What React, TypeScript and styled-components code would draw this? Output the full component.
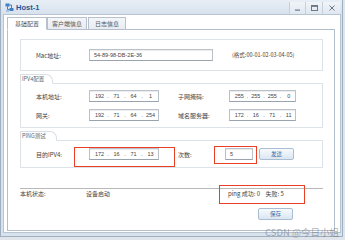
import React from "react";
import styled, { createGlobalStyle } from "styled-components";

const GlobalStyle = createGlobalStyle`
  html, body { margin: 0; padding: 0; }
  body {
    width: 345px;
    height: 240px;
    overflow: hidden;
    background: #dfe5ea;
    font-family: "Noto Sans CJK SC", "Noto Sans", sans-serif;
    color: #444;
  }
`;

const Page = styled.div`
  position: relative;
  width: 345px;
  height: 240px;
  overflow: hidden;
`;

const Window = styled.div`
  width: 343px;
  height: 237px;
  box-sizing: border-box;
  background: linear-gradient(#e8eef5, #d8e2ed 14px, #d9e3ee);
  border: 1px solid #9eafc1;
  border-top: none;
  padding: 0 1px 3px 2px;
  display: flex;
  flex-direction: column;
`;

const TitleBar = styled.div`
  height: 14px;
  display: flex;
  align-items: center;
`;

const Title = styled.span`
  font-family: "Liberation Sans", "Noto Sans CJK SC", sans-serif;
  font-size: 7.5px;
  font-weight: bold;
  color: #1f5796;
  margin-left: 2px;
`;

const WinButtons = styled.div`
  margin-left: auto;
  display: flex;
  height: 12px;
  margin-top: 1px;
  margin-right: 1px;
`;

const WinButton = styled.div<{ $w: number }>`
  width: ${(p) => p.$w}px;
  height: 12px;
  display: flex;
  align-items: center;
  justify-content: center;
  border-left: 1px solid #c5d0dc;
  background: linear-gradient(#f1f5f9, #dfe7f0);
`;

const Body = styled.div`
  flex: 1;
  background: #fff;
  border: 1px solid #b7c4d2;
  padding: 2px 5px 1px 3px;
  display: flex;
  flex-direction: column;
`;

const Tabs = styled.div`
  display: flex;
  height: 12px;
  position: relative;
  z-index: 1;
`;

const Tab = styled.div<{ $w: number; $active?: boolean; $gap?: number }>`
  width: ${(p) => p.$w}px;
  height: ${(p) => (p.$active ? 13 : 12)}px;
  box-sizing: border-box;
  margin-right: ${(p) => p.$gap ?? 0}px;
  border: 1px solid #b6c1cd;
  border-bottom: ${(p) => (p.$active ? "1px solid #fff" : "none")};
  background: ${(p) => (p.$active ? "#fff" : "linear-gradient(#f4f6f9, #e8ecf1)")};
  font-size: 6px;
  color: #555;
  display: flex;
  align-items: center;
  justify-content: center;
  padding-bottom: ${(p) => (p.$active ? 1 : 0)}px;
`;

const Panel = styled.div`
  flex: 1;
  border: 1px solid #b3bfcc;
  padding: 9px 11px 0 12px;
  display: flex;
  flex-direction: column;
`;

const MacBox = styled.div`
  height: 32px;
  box-sizing: border-box;
  border: 1px solid #dde2e8;
  display: flex;
  align-items: center;
  padding-left: 15px;
`;

const Label = styled.span<{ $w: number; $ml?: number }>`
  width: ${(p) => p.$w}px;
  margin-left: ${(p) => p.$ml ?? 0}px;
  flex-shrink: 0;
  font-size: 6px;
  color: #444;
  white-space: nowrap;
`;

const Input = styled.div<{ $w: number }>`
  width: ${(p) => p.$w}px;
  height: 12px;
  box-sizing: border-box;
  flex-shrink: 0;
  border: 1px solid #b9c1ca;
  border-bottom-color: #9aa4ae;
  box-shadow: inset 0 1px 1px rgba(0, 0, 0, 0.08);
  background: #fff;
  display: flex;
  align-items: center;
  padding-left: 4px;
  font-family: "Liberation Sans", sans-serif;
  font-size: 5.5px;
  color: #444;
`;

const IpBox = styled(Input)`
  padding-left: 3px;
`;

const Seg = styled.span`
  width: 13px;
  text-align: center;
`;

const Dot = styled.span`
  width: 4px;
  text-align: center;
`;

const Hint = styled.span`
  margin-left: 19px;
  font-size: 5.5px;
  color: #444;
  white-space: nowrap;
`;

const Group = styled.div<{ $mt: number }>`
  margin-top: ${(p) => p.$mt}px;
  display: flex;
  flex-direction: column;
`;

const Legend = styled.div<{ $w: number }>`
  width: ${(p) => p.$w}px;
  height: 10px;
  box-sizing: border-box;
  border: 1px solid #d9dee4;
  border-bottom: 1px solid #fff;
  border-top-right-radius: 7px;
  margin-bottom: -1px;
  position: relative;
  z-index: 1;
  background: #fff;
  font-size: 5.5px;
  color: #666;
  padding-left: 1px;
  display: flex;
  align-items: center;
`;

const GroupBody = styled.div<{ $pad: number }>`
  border: 1px solid #dde2e8;
  padding: ${(p) => p.$pad}px 0 ${(p) => p.$pad}px 15px;
  display: flex;
  flex-direction: column;
  gap: 7px;
`;

const Row = styled.div`
  display: flex;
  align-items: center;
  height: 12px;
`;

const Button = styled.div<{ $ml?: number }>`
  width: 35px;
  height: 12px;
  box-sizing: border-box;
  margin-left: ${(p) => p.$ml ?? 0}px;
  border: 1px solid #a9bdd3;
  border-radius: 2px;
  background: linear-gradient(#f7fafd, #dbe6f2);
  color: #3d6fa8;
  font-size: 5.5px;
  display: flex;
  align-items: center;
  justify-content: center;
`;

const Divider = styled.div`
  margin-top: 20px;
  height: 1px;
  background: #b9b9b9;
`;

const StatusRow = styled.div`
  display: flex;
  align-items: center;
  height: 8px;
`;

const StatusText = styled.span<{ $w?: number }>`
  width: ${(p) => (p.$w ? `${p.$w}px` : "auto")};
  font-size: 6px;
  color: #444;
  white-space: nowrap;
`;

const SaveRow = styled.div`
  display: flex;
  justify-content: flex-end;
  padding-right: 30px;
  margin-top: 11px;
`;

const Mark = styled.div<{ $x: number; $y: number; $w: number; $h: number }>`
  position: absolute;
  left: ${(p) => p.$x}px;
  top: ${(p) => p.$y}px;
  width: ${(p) => p.$w}px;
  height: ${(p) => p.$h}px;
  box-sizing: border-box;
  border: 1px solid #ea3f25;
  pointer-events: none;
`;

const Watermark = styled.div`
  position: absolute;
  left: 265px;
  top: 225px;
  font-size: 9.5px;
  color: rgba(110, 110, 110, 0.55);
  white-space: nowrap;
`;

function IpField({ w, parts }: { w: number; parts: string[] }) {
  return (
    <IpBox $w={w}>
      {parts.map((v, i) => (
        <React.Fragment key={i}>
          {i > 0 && <Dot>.</Dot>}
          <Seg>{v}</Seg>
        </React.Fragment>
      ))}
    </IpBox>
  );
}

function HostIcon() {
  return (
    <svg width="9" height="9" viewBox="0 0 9 9" style={{ marginLeft: 2 }}>
      <rect x="0.5" y="0.5" width="4" height="3" fill="#3f7fc4" />
      <rect x="4.5" y="5" width="4" height="3" fill="#3f7fc4" />
      <path d="M2.5 3.5 V6.5 H4.5 M6.5 5 V2 H4.5" stroke="#2a64a6" strokeWidth="0.8" fill="none" />
      <rect x="1" y="7.5" width="3" height="1" fill="#6fa1d6" />
    </svg>
  );
}

export default function App() {
  return (
    <Page>
      <GlobalStyle />
      <Window>
        <TitleBar>
          <HostIcon />
          <Title>Host-1</Title>
          <WinButtons>
            <WinButton $w={15}>
              <svg width="6" height="6" viewBox="0 0 6 6">
                <rect x="0" y="4.5" width="5" height="1.2" fill="#6a7888" />
              </svg>
            </WinButton>
            <WinButton $w={16}>
              <svg width="7" height="6" viewBox="0 0 7 6">
                <rect x="0.5" y="0.5" width="6" height="5" fill="none" stroke="#6a7888" strokeWidth="1" />
                <rect x="0.5" y="0.5" width="6" height="1.4" fill="#6a7888" />
              </svg>
            </WinButton>
            <WinButton $w={17}>
              <svg width="6" height="6" viewBox="0 0 6 6">
                <path d="M0.5 0.5 L5.5 5.5 M5.5 0.5 L0.5 5.5" stroke="#6a7888" strokeWidth="1" />
              </svg>
            </WinButton>
          </WinButtons>
        </TitleBar>
        <Body>
          <Tabs>
            <Tab $w={40} $active>基础配置</Tab>
            <Tab $w={40} $gap={1}>客户端信息</Tab>
            <Tab $w={38}>日志信息</Tab>
          </Tabs>
          <Panel>
            <MacBox>
              <Label $w={53}>Mac地址:</Label>
              <Input $w={124}>54-89-98-DB-2E-36</Input>
              <Hint>(格式:00-01-02-03-04-05)</Hint>
            </MacBox>

            <Group $mt={3}>
              <Legend $w={33}>IPV4配置</Legend>
              <GroupBody $pad={6}>
                <Row>
                  <Label $w={53}>本机地址:</Label>
                  <IpField w={70} parts={["192", "71", "64", "1"]} />
                  <Label $w={51} $ml={19}>子网掩码:</Label>
                  <IpField w={67} parts={["255", "255", "255", "0"]} />
                </Row>
                <Row>
                  <Label $w={53}>网关:</Label>
                  <IpField w={70} parts={["192", "71", "64", "254"]} />
                  <Label $w={51} $ml={19}>域名服务器:</Label>
                  <IpField w={67} parts={["172", "16", "71", "11"]} />
                </Row>
              </GroupBody>
            </Group>

            <Group $mt={3}>
              <Legend $w={37}>PING测试</Legend>
              <GroupBody $pad={7}>
                <Row>
                  <Label $w={53}>目的IPV4:</Label>
                  <IpField w={70} parts={["172", "16", "71", "13"]} />
                  <Label $w={47} $ml={19}>次数:</Label>
                  <Input $w={28}>5</Input>
                  <Button $ml={6}>发送</Button>
                </Row>
              </GroupBody>
            </Group>

            <Divider />
            <StatusRow>
              <StatusText $w={66}>本机状态:</StatusText>
              <StatusText $w={142}>设备启动</StatusText>
              <StatusText>ping 成功: 0&nbsp;&nbsp;&nbsp;&nbsp;失败: 5</StatusText>
            </StatusRow>
            <SaveRow>
              <Button>保存</Button>
            </SaveRow>
          </Panel>
        </Body>
      </Window>
      <Mark $x={74} $y={147} $w={101} $h={20} />
      <Mark $x={214} $y={146} $w={43} $h={18} />
      <Mark $x={219} $y={185} $w={86} $h={19} />
      <Watermark>CSDN @今日小姐</Watermark>
    </Page>
  );
}
